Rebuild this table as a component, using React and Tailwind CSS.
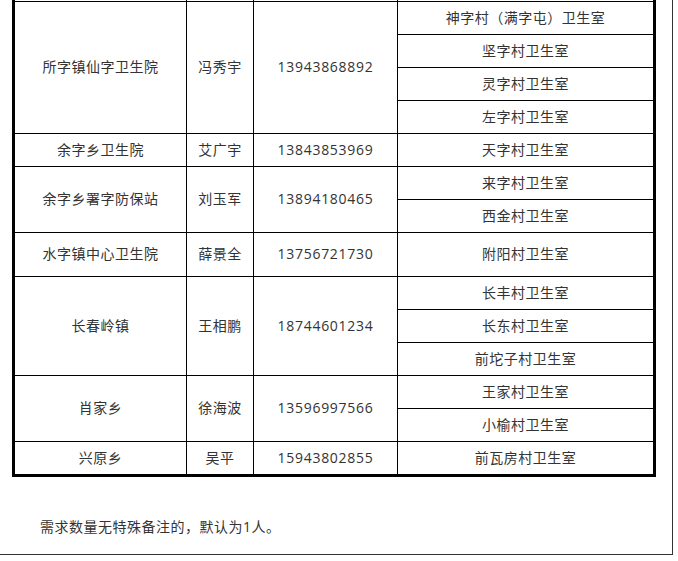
import React from "react";

const groups = [
  { org: "所字镇仙字卫生院", name: "冯秀宇", phone: "13943868892", subs: ["神字村（满字屯）卫生室", "坚字村卫生室", "灵字村卫生室", "左字村卫生室"] },
  { org: "余字乡卫生院", name: "艾广宇", phone: "13843853969", subs: ["天字村卫生室"] },
  { org: "余字乡署字防保站", name: "刘玉军", phone: "13894180465", subs: ["来字村卫生室", "西金村卫生室"] },
  { org: "水字镇中心卫生院", name: "薛景全", phone: "13756721730", subs: ["附阳村卫生室"], tall: true },
  { org: "长春岭镇", name: "王相鹏", phone: "18744601234", subs: ["长丰村卫生室", "长东村卫生室", "前坨子村卫生室"] },
  { org: "肖家乡", name: "徐海波", phone: "13596997566", subs: ["王家村卫生室", "小榆村卫生室"] },
  { org: "兴原乡", name: "吴平", phone: "15943802855", subs: ["前瓦房村卫生室"] },
];

const font = { fontFamily: '"Open Sans", "Noto Sans CJK SC", sans-serif' };

function Group({ g }) {
  return (
    <div className="flex border-t border-black">
      <div className="w-[172px] shrink-0 border-r border-black flex items-center justify-center pb-[2px]">{g.org}</div>
      <div className="w-[67px] shrink-0 border-r border-black flex items-center justify-center pb-[2px]">{g.name}</div>
      <div className="w-[144px] shrink-0 border-r border-black flex items-center justify-center pb-[2px] tracking-[0.7px]">{g.phone}</div>
      <div className="w-[255px] shrink-0 flex flex-col">
        {g.subs.map((s, i) => (
          <div
            key={i}
            className={
              (i === 0 ? (g.tall ? "h-[43px]" : "h-[32px]") : "h-[33px] border-t border-black") +
              " flex items-center justify-center pb-[2px]"
            }
          >
            {s}
          </div>
        ))}
      </div>
    </div>
  );
}

export default function App() {
  return (
    <div className="w-[678px] h-[561px] bg-white text-[14px] text-[#333] tracking-[0.5px]" style={font}>
      <div className="w-[673px] h-[555px] border-r border-b border-[#333]">
        <div className="ml-[12px] w-[644px] border-l-[3px] border-r-[3px] border-b-[3px] border-black">
          <div className="flex h-[1px]">
            <div className="w-[172px] border-r border-black" />
            <div className="w-[67px] border-r border-black" />
            <div className="w-[144px] border-r border-black" />
            <div className="w-[255px]" />
          </div>
          {groups.map((g, i) => (
            <Group key={i} g={g} />
          ))}
        </div>
        <div className="mt-[40px] pl-[40px] leading-[20px]">需求数量无特殊备注的，默认为1人。</div>
      </div>
    </div>
  );
}
